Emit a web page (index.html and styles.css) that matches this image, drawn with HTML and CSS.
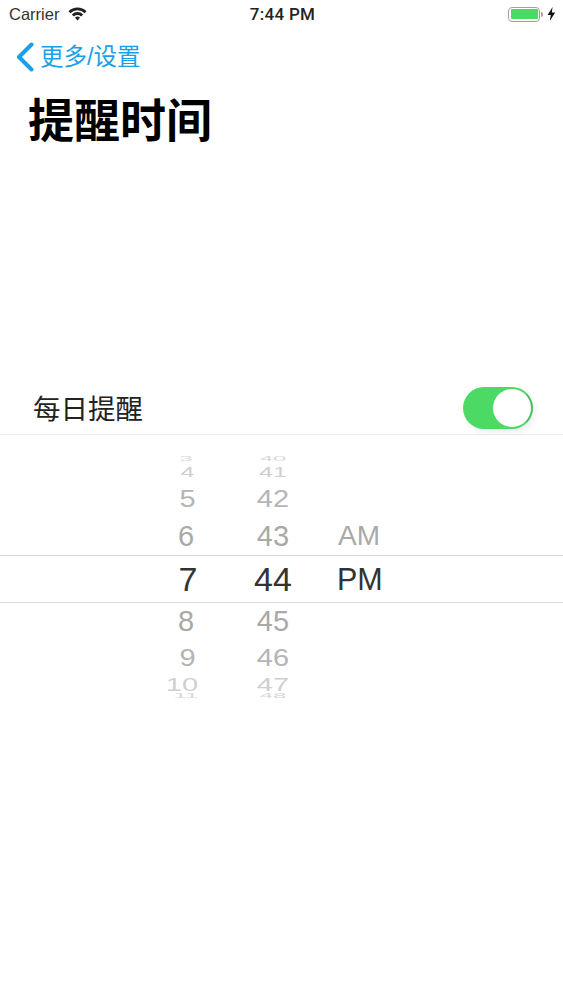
FILE: index.html
```html
<!DOCTYPE html>
<html lang="zh">
<head>
    <meta charset="UTF-8">
    <meta name="viewport" content="width=device-width, initial-scale=1.0">
    <title>提醒时间</title>
    <link rel="stylesheet" href="styles.css">
</head>
<body>
    <div id="container">
        <!-- Status Bar -->
        <div class="status-bar">
            <div class="status-left">
                <span class="carrier">Carrier</span>
                <svg class="wifi" width="19" height="15" viewBox="0 0 20 15">
                    <path d="M0.5 5 A13.5 13.5 0 0 1 19.5 5 L17.4 7.2 A10.5 10.5 0 0 0 2.6 7.2 Z" fill="#222"/>
                    <path d="M4 8.5 A8.5 8.5 0 0 1 16 8.5 L13.8 10.7 A5.4 5.4 0 0 0 6.2 10.7 Z" fill="#222"/>
                    <path d="M7.4 12 A3.6 3.6 0 0 1 12.6 12 L10 14.8 Z" fill="#222"/>
                </svg>
            </div>
            <span class="clock">7:44 PM</span>
            <div class="status-right">
                <div class="battery"><div class="battery-fill"></div></div>
                <div class="battery-tip"></div>
                <svg class="bolt" width="9" height="14" viewBox="0 0 9 14">
                    <path d="M5.6 0 L0.6 8 L3.8 8 L2.8 14 L8.2 5.6 L4.8 5.6 Z" fill="#111"/>
                </svg>
            </div>
        </div>

        <!-- Nav Bar -->
        <div class="nav-bar">
            <svg class="back-icon" width="20" height="30" viewBox="0 0 20 30">
                <path d="M16.5 2.5 L4 15 L16.5 27.5" fill="none" stroke="#1a9fe8" stroke-width="4" stroke-linecap="round" stroke-linejoin="round"/>
            </svg>
            <span class="back-text">更多/设置</span>
        </div>
        <h1 class="title">提醒时间</h1>

        <!-- Daily Reminder Row -->
        <div class="switch-row">
            <span class="switch-label">每日提醒</span>
            <div class="switch">
                <div class="knob"></div>
            </div>
        </div>

        <!-- Time Picker -->
        <div class="picker">
            <div class="picker-row r-1"><span>3</span><span>40</span><span></span></div>
            <div class="picker-row r-2"><span>4</span><span>41</span><span></span></div>
            <div class="picker-row r-3"><span>5</span><span>42</span><span></span></div>
            <div class="picker-row r-4"><span>6</span><span>43</span><span class="ampm">AM</span></div>
            <div class="picker-row selected"><span>7</span><span>44</span><span class="ampm">PM</span></div>
            <div class="picker-row r-4 after"><span>8</span><span>45</span><span></span></div>
            <div class="picker-row r-3 after-3"><span>9</span><span>46</span><span></span></div>
            <div class="picker-row r-2 after-2"><span>10</span><span>47</span><span></span></div>
            <div class="picker-row r-1 after-1"><span>11</span><span>48</span><span></span></div>
        </div>
    </div>
</body>
</html>
```

FILE: styles.css
```css
body{
    margin: 0;
    background-color: #fff;
    font-family: "Liberation Sans", "Noto Sans CJK SC", sans-serif;
}
#container{
    width: 563px;
    min-height: 1000px;
    overflow: hidden;
}

/* Status Bar */
.status-bar{
    height: 28px;
    display: grid;
    grid-template-columns: 1fr auto 1fr;
    align-items: center;
    padding: 0 7px 0 9px;
    color: #222;
}
.status-left{
    display: flex;
    align-items: center;
    gap: 9px;
}
.carrier{
    font-size: 16.5px;
    color: #333;
}
.wifi{
    margin-top: -2px;
}
.clock{
    font-family: Roboto, sans-serif;
    font-size: 17px;
    font-weight: 500;
    letter-spacing: 0.3px;
    color: #222;
}
.status-right{
    display: flex;
    align-items: center;
    justify-content: flex-end;
}
.battery{
    width: 32px;
    height: 15px;
    box-sizing: border-box;
    border: 1.5px solid #a3a3a3;
    border-radius: 4px;
    padding: 1.5px;
}
.battery-fill{
    height: 100%;
    background-color: #4cd964;
    border-radius: 1px;
}
.battery-tip{
    width: 2px;
    height: 5px;
    background-color: #a3a3a3;
    margin-left: 1px;
    border-radius: 0 2px 2px 0;
}
.bolt{
    margin-left: 4px;
}

/* Nav Bar */
.nav-bar{
    height: 30px;
    margin-top: 14px;
    display: flex;
    align-items: center;
    padding-left: 15px;
}
.back-text{
    font-size: 23.5px;
    line-height: 28px;
    color: #1a9fe8;
    margin-left: 5px;
}
.title{
    margin: 17px 0 0 28px;
    font-size: 46px;
    line-height: 64px;
    font-weight: bold;
    color: #000;
}

/* Switch Row */
.switch-row{
    height: 51px;
    margin-top: 231px;
    box-sizing: border-box;
    border-bottom: 1px solid #ececec;
    display: flex;
    align-items: center;
    justify-content: space-between;
    padding: 0 30px 2px 33px;
}
.switch-label{
    font-size: 27.5px;
    color: #222;
    margin-bottom: 3px;
}
.switch{
    width: 70px;
    height: 42px;
    box-sizing: border-box;
    background-color: #4cd964;
    border: 2px solid #4cd964;
    border-right-color: #4fb868;
    border-radius: 21px;
    display: flex;
    justify-content: flex-end;
    box-shadow: 2px 3px 6px rgba(0, 0, 0, 0.08);
}
.knob{
    width: 38px;
    height: 38px;
    background-color: #fff;
    border-radius: 50%;
}

/* Time Picker */
.picker{
    margin-top: 20px;
}
.picker-row{
    display: grid;
    grid-template-columns: 80px 80px 1fr;
    column-gap: 7px;
    padding-left: 146px;
    align-items: center;
    align-content: center;
    text-align: center;
    overflow: hidden;
    font-size: 29px;
    color: #a9a9a9;
}
.picker-row span{
    display: block;
    line-height: 1;
}
.ampm{
    text-align: left;
    padding-left: 18px;
}
.picker-row .ampm{
    font-size: 28px;
}
.r-1{
    height: 8px;
    font-size: 24px;
    color: #d8d8d8;
}
.r-1 span{
    transform: scaleY(0.3);
}
.r-2{
    height: 18px;
    font-size: 25px;
    color: #cfcfcf;
}
.r-2 span{
    transform: scaleY(0.58);
}
.r-2 span:first-child,
.r-3 span:first-child{
    padding-left: 3px;
}
.r-3{
    height: 36px;
    font-size: 29px;
    color: #b5b5b5;
}
.r-3 span{
    transform: scaleY(0.8);
}
.r-4{
    height: 38px;
}
.after{
    height: 36px;
}
.after-3{
    height: 38px;
}
.after-2{
    height: 16px;
    font-size: 29px;
}
.after-2 span{
    transform: scaleY(0.62);
}
.after-2 span:first-child{
    padding: 0 8px 0 0;
}
.after-1{
    height: 6px;
}
.selected{
    height: 48px;
    box-sizing: border-box;
    border-top: 1px solid #d8d8d8;
    border-bottom: 1px solid #d8d8d8;
    font-size: 34px;
    color: #333;
}
.selected span:first-child{
    padding-left: 4px;
}
.picker-row.selected .ampm{
    font-size: 30.5px;
    padding-left: 17px;
}
```
